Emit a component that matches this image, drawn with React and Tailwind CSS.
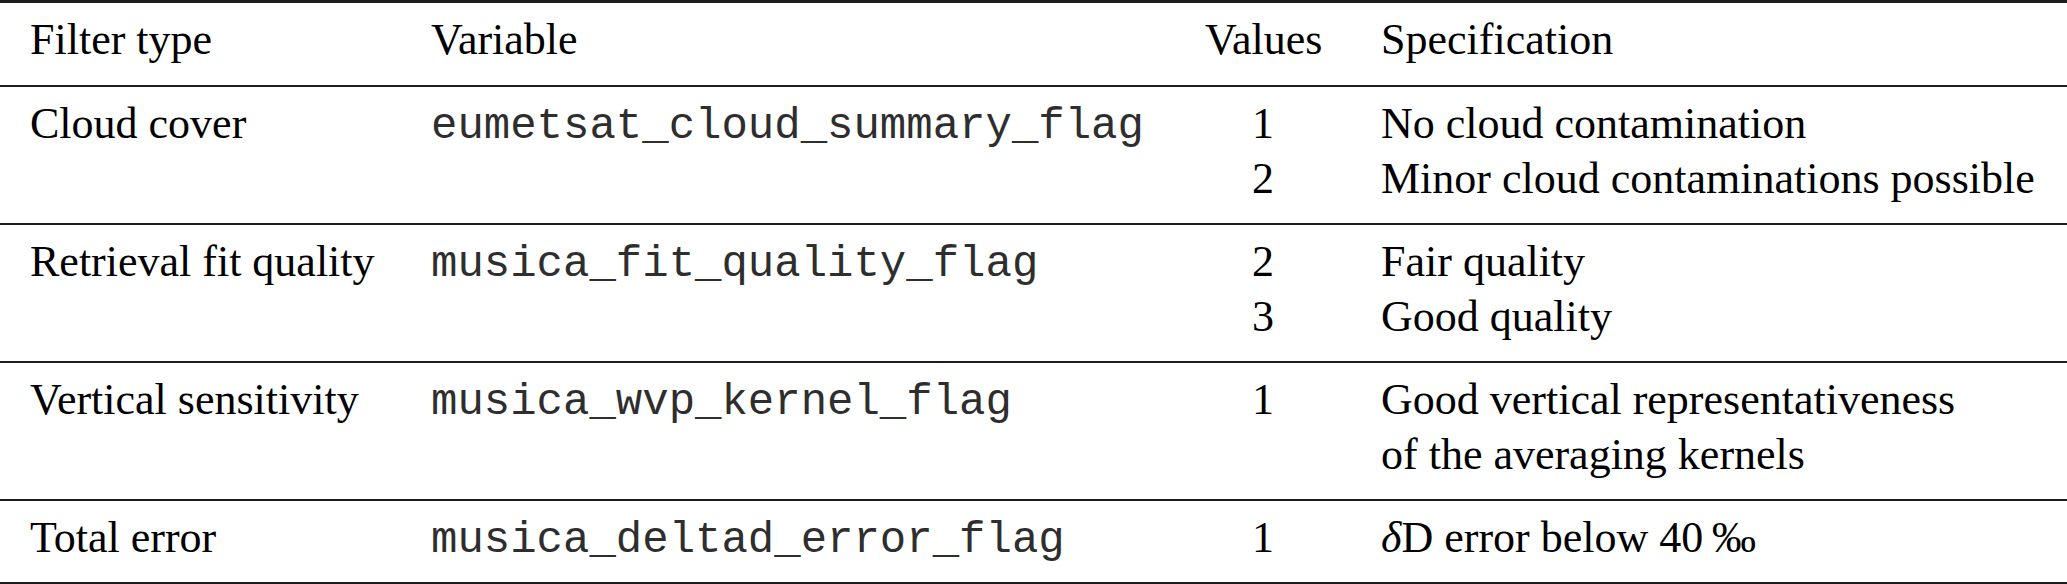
const rows = [
  {
    type: 'Cloud cover',
    variable: 'eumetsat_cloud_summary_flag',
    values: ['1', '2'],
    spec: ['No cloud contamination', 'Minor cloud contaminations possible'],
  },
  {
    type: 'Retrieval fit quality',
    variable: 'musica_fit_quality_flag',
    values: ['2', '3'],
    spec: ['Fair quality', 'Good quality'],
  },
  {
    type: 'Vertical sensitivity',
    variable: 'musica_wvp_kernel_flag',
    values: ['1'],
    spec: ['Good vertical representativeness', 'of the averaging kernels'],
  },
  {
    type: 'Total error',
    variable: 'musica_deltad_error_flag',
    values: ['1'],
    spec: [
      <span key="d">
        <i>δ</i>D error below 40&#8201;‰
      </span>,
    ],
  },
]

function App() {
  const cell = 'align-top px-[30px] pt-[9px] pb-[17px] whitespace-nowrap'

  return (
    <div className="w-[2067px] h-[584px] bg-white text-black font-['Liberation_Serif','Times_New_Roman',serif] text-[44px] leading-[55px]">
      <table className="w-[2067px] table-fixed border-collapse">
        <colgroup>
          <col className="w-[401px]" />
          <col className="w-[774px]" />
          <col className="w-[176px]" />
          <col className="w-[716px]" />
        </colgroup>
        <thead>
          <tr className="border-t-[3px] border-b-2 border-[#1c1c1c]">
            <th className={`${cell} pt-[8px] pb-[18px] text-left font-normal`}>Filter type</th>
            <th className={`${cell} pt-[8px] pb-[18px] text-left font-normal`}>Variable</th>
            <th className={`${cell} pt-[8px] pb-[18px] text-center font-normal`}>Values</th>
            <th className={`${cell} pt-[8px] pb-[18px] text-left font-normal`}>Specification</th>
          </tr>
        </thead>
        <tbody>
          {rows.map((r, i) => (
            <tr
              key={r.type}
              className={
                i === rows.length - 1
                  ? 'border-b-[3px] border-[#1c1c1c]'
                  : 'border-b-2 border-[#1c1c1c]'
              }
            >
              <td className={cell}>{r.type}</td>
              <td className={cell}>
                {/* courier-ish thin look: slightly lighter ink */}
                <span className="font-['Liberation_Mono','Courier_New',monospace] leading-none text-[#2e2e2e]">
                  {r.variable}
                </span>
              </td>
              <td className={`${cell} text-center`}>
                {r.values.map((v, j) => (
                  <div key={j}>{v}</div>
                ))}
              </td>
              <td className={cell}>
                {r.spec.map((s, j) => (
                  <div key={j}>{s}</div>
                ))}
              </td>
            </tr>
          ))}
        </tbody>
      </table>
    </div>
  )
}

export default App
